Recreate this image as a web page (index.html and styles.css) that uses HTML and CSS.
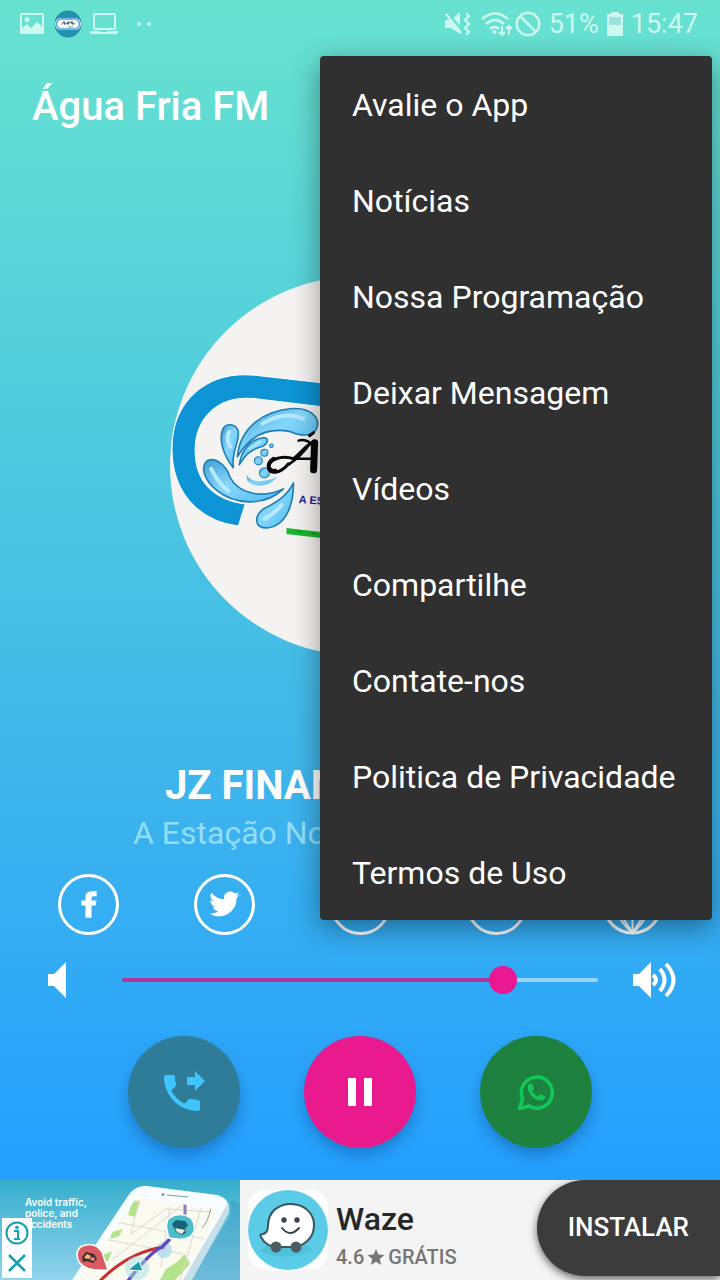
FILE: index.html
```html
<!DOCTYPE html>
<html lang="pt-BR">
<head>
<meta charset="utf-8">
<meta name="viewport" content="width=device-width, initial-scale=1">
<title>Água Fria FM</title>
<link rel="stylesheet" href="styles.css">
</head>
<body>
<div class="app">
  <div class="status">
    <div class="status-left">
      <svg width="24" height="24" viewBox="0 0 24 24"><path fill="currentColor" fill-rule="evenodd" d="M2 1h20a2 2 0 0 1 2 2v19H0V3a2 2 0 0 1 2-2zM2 3v13l5-4 4 4 6-6 5 4V3z"/><circle cx="7" cy="7.500" r="2.500" fill="currentColor"/></svg>
      <svg width="28" height="28" viewBox="0 0 28 28"><circle cx="14" cy="14" r="13.500" fill="#258fae"/><rect x="1" y="8" width="26" height="12" rx="6" fill="#fff"/><rect x="2.500" y="9" width="23" height="10" rx="5" fill="none" stroke="#4e9fdd" stroke-width="1.500"/><path d="M8 14.500l2-3 1 3 2-2 1 2 1-3 2 2 1-2 1 3 2-2" fill="none" stroke="#264769"/><path d="M14 17h5" stroke="#5dae63"/></svg>
      <svg width="28" height="24" viewBox="0 0 28 24"><rect x="4" y="2" width="21" height="15" rx="1" fill="none" stroke="currentColor" stroke-width="2"/><path d="M0 19h10l1 1h6l1-1h10v2q0 1-1 1H1q-1 0-1-1z" fill="currentColor"/></svg>
      <svg class="more-dots" width="16" height="6" viewBox="0 0 16 6" fill="currentColor"><circle cx="3" cy="3" r="2"/><circle cx="13" cy="3" r="2"/></svg>
    </div>
    <div class="status-right">
      <svg width="28" height="26" viewBox="0 0 28 26"><path d="M1 9h6l9-8v22l-9-6H1z" fill="currentColor"/><path d="M2 0l16 19" stroke="#65dfd1" stroke-width="2.500"/><path d="M2 3l15 19M22 2l3 3-4 4 4 4-4 4 4 4-3 3" fill="none" stroke="currentColor" stroke-width="2.200"/></svg>
      <svg class="wifi" width="32" height="26" viewBox="0 0 32 26" fill="none" stroke="currentColor"><path d="M1 8q13-11 26 0M5 13q9-8 18 0M9 18q5-4 9 0" stroke-width="2.500"/><circle cx="13.500" cy="21" r="2" fill="currentColor" stroke="none"/><path d="M21 15v9m-3-3 3 3 3-3M28 24v-9m-3 3 3-3 3 3" stroke-width="2"/></svg>
      <svg class="blocked" width="26" height="26" viewBox="0 0 26 26" fill="none" stroke="currentColor" stroke-width="2.500"><circle cx="13" cy="13" r="11.300"/><path d="M5 5l16 16"/></svg>
      <span>51%</span>
      <svg class="battery" width="16" height="24" viewBox="0 0 16 24"><path d="M4 0h8v2h4v22H0V2h4z" fill="currentColor"/><path d="M2 5h12v8H2z" fill="#9be3da"/></svg>
      <time>15:47</time>
    </div>
  </div>

  <header class="appbar"><h1>Água Fria FM</h1></header>

  <main class="player">
    <div class="cover">
      <svg class="artwork" viewBox="170 276 380 380" role="img" aria-label="Água Fria FM">
        <defs><linearGradient id="drop" x1="0" y1="0" x2="1" y2="1"><stop offset="0" stop-color="#3f9fd4"/><stop offset=".45" stop-color="#86d6fa"/><stop offset="1" stop-color="#4fbcf0"/></linearGradient></defs>
        <circle cx="360" cy="466" r="189" fill="#f4f3f1"/>
        <path d="M400 392L320 383 258 376C207 370 173 402 173 449C173 493 200 521 239 526L246 504C213 500 196 480 196 451C196 418 219 396 254 399L320 407 400 415Z" fill="#0d94d4" stroke="#fff" stroke-width="1"/>
        <g fill="url(#drop)" stroke="#197eb6" stroke-width="1.600" stroke-linejoin="round">
          <path d="M238 457C241 428 264 411 293 409C312 408 321 419 317 429C313 438 300 436 291 432C267 427 250 437 238 457Z"/>
          <path d="M234 468C224 455 220 441 223 431C226 422 237 424 239 432C240 444 232 451 234 468Z"/>
          <path d="M240 465C242 450 252 439 264 438C270 438 269 444 262 447C251 450 246 455 240 465Z"/>
          <path d="M284 489C265 507 235 505 217 490C203 478 202 466 208 461C216 457 227 465 231 478C239 492 260 500 284 489Z"/>
          <path d="M294 483C294 506 286 526 268 528C254 528 255 516 264 509C276 503 287 497 294 483Z"/>
          <path d="M247 475C251 482 262 484 278 477C269 488 254 488 248 481Z" stroke="none"/>
          <g stroke-width="1"><circle cx="259" cy="461" r="4"/><circle cx="265" cy="473" r="5"/><circle cx="265" cy="453" r="3.500"/><circle cx="272" cy="446" r="1.800"/></g>
        </g>
        <g fill="none" stroke="#b5e9fd" stroke-width="4" stroke-linecap="round"><path d="M263 424Q285 411 304 419M230 432Q226 439 231 447M212 469Q218 482 229 491M282 505Q276 513 265 519"/><path d="M250 449L261 442" stroke-width="2"/></g>
        <g fill="none" stroke="#080808" stroke-linecap="round"><path d="M289 464C281 474 270 475 269 468C268 460 282 455 294 459C304 451 307 444 315 442" stroke-width="3"/><path d="M274 459C267 464 268 472 276 471" stroke-width="4"/><path d="M289 465Q302 456 311 443M298 459h18M299 441q5-2 10 1" stroke-width="2.500"/><path d="M315 443L314 470" stroke-width="7"/><path d="M310 436L314 433" stroke-width="3"/></g>
        <text class="motto" x="299" y="503" transform="rotate(4 299 503)">A ES</text>
        <path d="M287 528L330 533v6l-43-5z" fill="#19b629"/><path d="M298 531l4 1M312 533l4 1" stroke="#217735"/>
      </svg>
    </div>

    <div class="track">
      <h2>JZ FINAN</h2>
      <p>A Estação No</p>
    </div>

    <nav class="social" aria-label="Redes sociais">
      <a href="#facebook" aria-label="Facebook"><svg viewBox="0 0 60 60"><circle cx="30" cy="30" r="28.500"/><path class="solid" d="M27 43V31h-4v-5h4v-3q0-6 6-6h5v5h-3q-2 0-2 2v2h5l-1 5h-4v12z"/></svg></a>
      <a href="#twitter" aria-label="Twitter"><svg viewBox="0 0 60 60"><circle cx="30" cy="30" r="28.500"/><path class="solid" transform="translate(15 14.500) scale(1.250)" d="M23.950 4.570a10 10 0 0 1-2.820.78 4.960 4.960 0 0 0 2.160-2.730 9.900 9.900 0 0 1-3.120 1.190 4.920 4.920 0 0 0-8.390 4.480A13.930 13.930 0 0 1 1.640 3.160a4.920 4.920 0 0 0 1.520 6.570 4.900 4.900 0 0 1-2.230-.61v.06a4.920 4.920 0 0 0 3.950 4.830 4.900 4.900 0 0 1-2.210.08 4.940 4.940 0 0 0 4.600 3.420A9.870 9.870 0 0 1 0 19.540a13.990 13.990 0 0 0 21.500-12.400A9.900 9.900 0 0 0 23.950 4.570z"/></svg></a>
      <a href="#instagram" aria-label="Instagram"><svg viewBox="0 0 60 60"><circle cx="30" cy="30" r="28.500"/></svg></a>
      <a href="#youtube" aria-label="YouTube"><svg viewBox="0 0 60 60"><circle cx="30" cy="30" r="28.500"/></svg></a>
      <a href="#site" aria-label="Site"><svg viewBox="0 0 60 60"><circle cx="30" cy="30" r="28"/><path d="M30 2v56M3 30h54M30 2Q-2 30 30 58Q62 30 30 2M30 58L16 36M30 58L44 36" stroke-width="2"/></svg></a>
    </nav>

    <div class="volume">
      <button class="vol-low" aria-label="Diminuir volume"><svg width="18" height="36" viewBox="0 0 18 36"><path d="M0 12h6L18 0v36L6 24H0z" fill="#fff"/></svg></button>
      <input type="range" min="0" max="100" value="82" aria-label="Volume">
      <button class="vol-high" aria-label="Aumentar volume"><svg width="43" height="36" viewBox="0 0 43 36"><path d="M0 12h6L18 0v36L6 24H0z" fill="#fff"/><path d="M20 13q6 5 0 10M27 7q9 11 0 22M33 2q15 16 0 32" fill="none" stroke="#fff" stroke-width="4"/></svg></button>
    </div>

    <div class="controls">
      <button class="fab call" aria-label="Ligar"><svg width="48" height="48" viewBox="0 0 24 24"><path fill="#40c4ff" d="M17.500 11.500l5-5-5-5v3h-4v4h4v3zm1.500 4.500c-1.250 0-2.450-.2-3.570-.57a1 1 0 0 0-1.020.24l-2.200 2.200a15 15 0 0 1-6.590-6.590l2.200-2.210c.28-.26.360-.65.250-1C7.700 6.950 7.500 5.750 7.500 4.500a1 1 0 0 0-1-1H3a1 1 0 0 0-1 1c0 9.390 7.610 17 17 17a1 1 0 0 0 1-1V17a1 1 0 0 0-1-1z"/></svg></button>
      <button class="fab pause" aria-label="Pausar"><svg width="24" height="28" viewBox="0 0 24 28"><path fill="#fff" d="M0 0h8v28H0zM16 0h8v28h-8z"/></svg></button>
      <button class="fab whats" aria-label="WhatsApp"><svg width="36" height="36" viewBox="0 0 36 36"><path d="M1.500 34.500l3-10A15.500 15.500 0 1 1 11 32z" fill="none" stroke="#12c75a" stroke-width="3.500"/><path fill="#12c75a" d="M12 9.500h2l2 5-2 2.500q2 4 6 5.500l2.300-2.500 5 2.500q0 4-5 4-8-1-12-10-2-5 1.700-7z"/></svg></button>
    </div>
  </main>

  <aside class="ad">
    <div class="ad-picture">
      <svg viewBox="0 0 240 100" role="img" aria-label="Waze">
        <defs>
          <linearGradient id="sky" x1="0" y1="0" x2="0" y2="1"><stop offset="0" stop-color="#35aecd"/><stop offset="1" stop-color="#91d4ec"/></linearGradient>
          <clipPath id="screen"><path d="M137 17L219 30 178 108H74z"/></clipPath>
        </defs>
        <path fill="url(#sky)" d="M0 0h240v100H0z"/>
        <path d="M190 100L231 35V20L240 24V100z" fill="#318fb9" opacity=".35"/>
        <path d="M72 100L130 13Q137 5 147 6L217 15Q229 18 229 29L191 100z" fill="#f8fdff"/><path d="M228 23L229 33 192 100h-9z" fill="#c7dfe9"/>
        <path d="M167 15l21 2" stroke="#7c9bab"/><circle cx="163" cy="14.500" r="1.500" fill="#8297a6"/>
        <g clip-path="url(#screen)">
          <path d="M70 10h160v98H70z" fill="#fafaf0"/>
          <path d="M133 20l7 2-5 15-7-2zM112 52l11-3-4 7-9 3zM166 89l11-7 8-8 5 10-15 16h-15zM188 44l5 1-2 7-5-3zM103 75l9-4-4 10-7 2z" fill="#b4e28b"/>
          <path d="M105 40l105 20M93 57l90 17M139 20l-8 34 35-25 45 3M112 80l69-54M170 27l-9 60M201 28l-23 80" fill="none" stroke="#ddd7ce" stroke-width="1"/>
          <path d="M211 28Q208 42 202 48" fill="none" stroke="#939e9e"/>
          <path d="M185 24v19" stroke="#8b7bc1" stroke-width="3"/>
        </g>
        <circle cx="164" cy="70" r="8" fill="#a5d4ef" opacity=".7"/>
        <path d="M99 102Q128 72 164 67" fill="none" stroke="#c92d30" stroke-width="3"/><path d="M128 101Q150 72 162 67L170 59" fill="none" stroke="#604abc" stroke-width="3.500"/>
        <circle cx="137" cy="88" r="12" fill="#a2dfe3" opacity=".5"/><path d="M128 90L139 81l4 10z" fill="#159ba9" stroke="#fff"/>
        <path d="M169 58Q164 43 169 38 180 31 191 38 198 48 191 56 184 61 169 58z" fill="#4fbdc9" stroke="#fff" stroke-width="1.500"/><path d="M172 44l4-4 9 1 3 4-3 4 1 4-4 2-6-3z" fill="#16637a"/><path d="M175 48l10 2-3 4-5-2z" fill="#f4e5d5"/>
        <path d="M108 90Q86 92 79 82 74 71 82 66 95 61 102 72z" fill="#da5b62" stroke="#fff" stroke-width="1.500"/><path d="M82 77l4-5 8 2 3 5-4 4-6-2-4 1z" fill="#402d33"/><path d="M84 78l3-4 4 2-2 3z" fill="#f5c06b"/><path d="M91 77l4 1-1 3-4-1z" fill="#ef858b"/>
      </svg>
      <p class="ad-copy">Avoid traffic,<br>police, and<br>accidents</p>
      <div class="ad-options">
        <button aria-label="Informações do anúncio"><svg width="26" height="26" viewBox="0 0 26 26"><circle cx="13" cy="13" r="10.500" fill="none" stroke="#17a0b1" stroke-width="2"/><circle cx="13" cy="7.500" r="1.800" fill="#17a0b1"/><path d="M10 11h4v8M10 19h6" fill="none" stroke="#17a0b1" stroke-width="2"/></svg></button>
        <button aria-label="Fechar anúncio"><svg width="26" height="26" viewBox="0 0 26 26"><path d="M5 5l16 16M21 5L5 21" stroke="#17a0b1" stroke-width="2.500"/></svg></button>
      </div>
    </div>
    <svg class="waze-icon" width="80" height="80" viewBox="0 0 80 80">
      <rect width="80" height="80" rx="18" fill="#fff"/><circle cx="40" cy="40" r="40" fill="#5acce8"/><path d="M12 61q25 12 52-1l-9-8-34 1z" fill="#43b1cc" opacity=".5"/>
      <path d="M13 44.500Q20 44 20 36C20 21 31 14 43 14C57 14 66 24 66 35C66 49 55 57 43 57H30Q18 57 13 47Q12 45 13 44.500Z" fill="#fff" stroke="#3c565d" stroke-width="2"/>
      <circle cx="36" cy="30" r="2.700" fill="#37474f"/><circle cx="49" cy="30" r="2.700" fill="#37474f"/><path d="M34 38q8 10 17 0" fill="none" stroke="#37474f" stroke-width="2" stroke-linecap="round"/><circle cx="28" cy="57" r="5.500" fill="#4c5c62"/><circle cx="48" cy="57" r="5.500" fill="#4c5c62"/>
    </svg>
    <div class="ad-text">
      <strong>Waze</strong>
      <span>4.6<svg width="18" height="16" viewBox="0 0 18 16"><path fill="currentColor" d="M9 0l2.300 5.500 6.200.4-4.800 4 1.500 6L9 12.700 3.800 16l1.500-6.100-4.800-4 6.200-.4z"/></svg>GRÁTIS</span>
    </div>
    <button class="install">INSTALAR</button>
  </aside>

  <div class="menu" role="menu">
    <button role="menuitem">Avalie o App</button>
    <button role="menuitem">Notícias</button>
    <button role="menuitem">Nossa Programação</button>
    <button role="menuitem">Deixar Mensagem</button>
    <button role="menuitem">Vídeos</button>
    <button role="menuitem">Compartilhe</button>
    <button role="menuitem">Contate-nos</button>
    <button role="menuitem">Politica de Privacidade</button>
    <button role="menuitem">Termos de Uso</button>
  </div>
</div>
</body>
</html>
```

FILE: styles.css
```css
* { box-sizing: border-box; }
body { margin: 0; font-family: Roboto, "Liberation Sans", sans-serif; color: #fff; }
h1, h2, p { margin: 0; }
button { border: 0; padding: 0; background: none; color: inherit; font: inherit; cursor: pointer; }
svg { display: block; flex: none; }

.app { position: relative; min-height: 100vh; display: flex; flex-direction: column; background: linear-gradient(#68e2cf 0, #52cfdb 28%, #40b7e9 58%, #249fff 92%); }

.status { height: 48px; padding: 0 22px 0 20px; display: flex; align-items: center; justify-content: space-between; color: #cdf7ef; font-size: 27px; line-height: 48px; }
.status-left, .status-right { display: flex; align-items: center; }
.status-left { gap: 10px; height: 46px; }
.status-left svg + svg + svg { margin-left: -2px; }
.status-left .more-dots { margin-left: 8px; }
.status-right { gap: 8px; height: 46px; }
.wifi { margin-left: 1px; }
.blocked { margin-left: -6px; }

.appbar { height: 112px; padding: 6px 32px 0; display: flex; align-items: center; }
.appbar h1 { font-size: 40px; line-height: 52px; font-weight: 500; }

.player { flex: 1; display: flex; flex-direction: column; }
.cover { flex: 1; display: flex; align-items: center; justify-content: center; padding-top: 12px; }
.artwork { width: 53%; min-width: 240px; }
.motto { font: 900 11px "Liberation Sans", sans-serif; fill: #20258b; }

.track { padding-left: 133px; white-space: nowrap; line-height: 48px; }
.track h2 { padding: 2px 0 0 32px; font-size: 40px; line-height: 48px; font-weight: 700; }
.track p { font-size: 32px; line-height: 46px; color: #93ddf9; }

.social { height: 96px; padding: 0 20px; display: grid; grid-template-columns: repeat(5, 1fr); place-items: center; }
.social svg { width: 61px; height: 61px; fill: none; stroke: #fff; stroke-width: 3; }
.social .solid { fill: #fff; stroke: none; }

.volume { height: 56px; padding: 0 44px; display: grid; grid-template-columns: 78px 1fr 78px; align-items: center; }
.vol-low { justify-self: start; padding-left: 4px; }
.vol-high { justify-self: end; }
.volume input { appearance: none; -webkit-appearance: none; width: 100%; height: 4px; margin: 0; border-radius: 2px; background: linear-gradient(90deg, #b1339b 80%, #9ad6fa 80%); }
.volume input::-webkit-slider-thumb { -webkit-appearance: none; width: 28px; height: 28px; border-radius: 50%; background: #e91790; }

.controls { padding: 28px 0 32px; display: flex; justify-content: center; gap: 64px; }
.fab { width: 112px; height: 112px; border-radius: 50%; display: grid; place-items: center; box-shadow: 0 8px 14px rgba(0, 40, 90, .28); }
.call { background: #2f7c98; }
.pause { background: #e91a8d; }
.whats { background: #1f8140; }

.ad { height: 100px; display: flex; background: #f4f4f4; overflow: hidden; }
.ad-picture { position: relative; width: 240px; }
.ad-copy { position: absolute; left: 25px; top: 17px; font: 600 10px/11px Inter, sans-serif; color: #fff; white-space: nowrap; }
.ad-options { position: absolute; left: 2px; top: 38px; width: 30px; height: 60px; display: grid; place-items: center; background: #fff; }
.waze-icon { margin: 10px 8px; }
.ad-text { padding-top: 20px; }
.ad-text strong { display: block; font-size: 32px; line-height: 38px; font-weight: 500; color: #272727; }
.ad-text span { display: flex; align-items: center; gap: 3px; font-size: 20px; line-height: 38px; font-weight: 500; color: #757575; }
.install { margin-left: auto; height: 96px; padding: 0 31px 2px; border-radius: 48px 0 0 48px; background: #3c3c3c; color: #fff; font-size: 26px; font-weight: 500; box-shadow: 0 3px 8px rgba(0, 0, 0, .6); }

.menu { position: absolute; top: 56px; right: 8px; width: 392px; border-radius: 4px; background: #303030; box-shadow: 0 8px 28px rgba(0, 0, 0, .4); display: flex; flex-direction: column; }
.menu button { height: 96px; padding: 2px 32px 0; text-align: left; white-space: nowrap; font-size: 32px; line-height: 40px; }
```
